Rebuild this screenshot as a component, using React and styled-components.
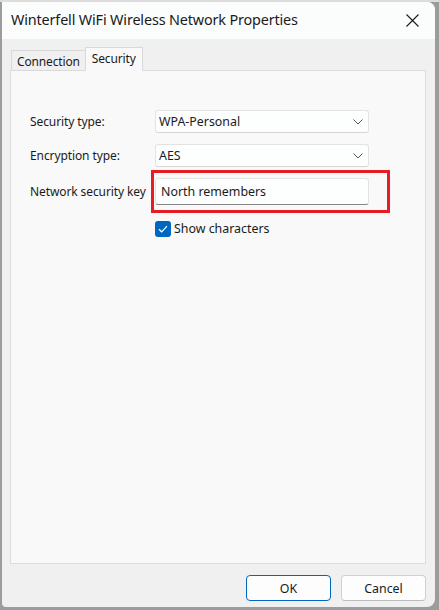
import React, { useState } from "react";
import styled, { createGlobalStyle } from "styled-components";

const GlobalStyle = createGlobalStyle`
  html, body {
    margin: 0;
    padding: 0;
    background: #9c9c9c;
  }
  body {
    font-family: "Noto Sans", "Liberation Sans", sans-serif;
    color: #1b1b1b;
  }
`

const Screen = styled.div`
  width: 439px;
  height: 610px;
  padding: 2px 0 0 2px;
  box-sizing: border-box;
  background: linear-gradient(#dcdcdc 0 2px, #9c9c9c 2px);
`

const Window = styled.div`
  width: 433px;
  height: 605px;
  display: flex;
  flex-direction: column;
  background: #f0f0f0;
  border-radius: 0 8px 8px 4px;
  overflow: hidden;
`

const TitleBar = styled.div`
  height: 37px;
  flex: none;
  display: flex;
  align-items: center;
  justify-content: space-between;
  padding: 0 0 0 9px;
  background: #fbfdfd;
`

const Title = styled.div`
  font-size: 14.4px;
  letter-spacing: -0.15px;
  color: #1a1a1a;
  margin-top: -2px;
`

const CloseButton = styled.div`
  width: 46px;
  height: 37px;
  display: flex;
  align-items: center;
  justify-content: center;
`

const Body = styled.div`
  flex: 1;
  display: flex;
  flex-direction: column;
  padding: 8px 9px 6px 8px;
`

const TabStrip = styled.div`
  display: flex;
  align-items: flex-end;
  height: 24px;
  padding-left: 1px;
  position: relative;
  z-index: 1;
  margin-bottom: -1px;
`

const Tab = styled.div`
  height: ${p => (p.$active ? "24px" : "21px")};
  padding: 0 ${p => (p.$active ? "6px" : "5px")};
  box-sizing: border-box;
  display: flex;
  align-items: ${p => (p.$active ? "flex-start" : "center")};
  padding-top: ${p => (p.$active ? "2px" : "1px")};
  font-size: 12px;
  letter-spacing: -0.15px;
  background: ${p => (p.$active ? "#f9f9f9" : "#f0f0f0")};
  border: 1px solid #d9d9d9;
  border-bottom: ${p => (p.$active ? "1px solid #f9f9f9" : "1px solid #d9d9d9")};
  margin-left: ${p => (p.$active ? "-1px" : "0")};
  color: #1a1a1a;
`

const Panel = styled.div`
  height: 494px;
  background: #f9f9f9;
  border: 1px solid #dcdcdc;
  box-sizing: border-box;
  padding: 39px 20px 0 19px;
  display: flex;
  flex-direction: column;
`

const FieldRow = styled.div`
  display: flex;
  align-items: center;
  height: ${p => p.$h || 23}px;
  margin-bottom: ${p => p.$gap || 11}px;
`

const Label = styled.div`
  width: 125px;
  flex: none;
  font-size: 12px;
  letter-spacing: -0.1px;
  color: #1b1b1b;
  white-space: nowrap;
`

const Select = styled.div`
  width: 214px;
  height: 100%;
  box-sizing: border-box;
  display: flex;
  align-items: center;
  justify-content: space-between;
  padding: 0 5px 0 3px;
  background: #fdfefe;
  border: 1px solid #e3e3e3;
  border-bottom-color: #d6d6d6;
  border-radius: 3px;
  font-size: 12.4px;
`

const InputWrap = styled.div`
  position: relative;
  width: 214px;
  height: 100%;
`

const KeyInput = styled.div`
  height: 100%;
  box-sizing: border-box;
  display: flex;
  align-items: center;
  padding: 0 0 1px 5px;
  background: #fdfefe;
  border: 1px solid #e3e3e3;
  border-bottom: 1px solid #868686;
  border-radius: 3px;
  font-size: 12.4px;
`

const Highlight = styled.div`
  position: absolute;
  left: -4px;
  right: -21px;
  top: -8px;
  bottom: -8px;
  border: 3px solid #e81c24;
  pointer-events: none;
`

const CheckRow = styled.label`
  display: flex;
  align-items: center;
  gap: 3px;
  margin-left: 125px;
  font-size: 12.4px;
  cursor: default;
`

const CheckBox = styled.span`
  width: 16px;
  height: 16px;
  border-radius: 3px;
  background: ${p => (p.$checked ? "#0067c0" : "#ffffff")};
  border: ${p => (p.$checked ? "none" : "1px solid #8a8a8a")};
  box-sizing: border-box;
  display: flex;
  align-items: center;
  justify-content: center;
`

const Footer = styled.div`
  display: flex;
  justify-content: flex-end;
  gap: 10px;
  padding-top: 11px;
`

const Button = styled.button`
  width: 85px;
  height: 26px;
  box-sizing: border-box;
  font-family: inherit;
  font-size: 12.4px;
  color: #1a1a1a;
  background: #fdfdfd;
  border: 1px solid ${p => (p.$primary ? "#0067c0" : "#d0d0d0")};
  border-bottom-color: ${p => (p.$primary ? "#0067c0" : "#bcbcbc")};
  border-radius: 4px;
  padding: 0;
`

const Chevron = () => (
  <svg width="10" height="6" viewBox="0 0 10 6">
    <path d="M0.5 0.5 L5 5 L9.5 0.5" fill="none" stroke="#555" strokeWidth="1" />
  </svg>
)

export default function App() {
  const [show, setShow] = useState(true);

  return (
    <>
      <GlobalStyle />
      <Screen>
        <Window>
          <TitleBar>
            <Title>Winterfell WiFi Wireless Network Properties</Title>
            <CloseButton>
              <svg width="13" height="13" viewBox="0 0 13 13">
                <path d="M0.5 0.5 L12.5 12.5 M12.5 0.5 L0.5 12.5" stroke="#1a1a1a" strokeWidth="1.1" />
              </svg>
            </CloseButton>
          </TitleBar>
          <Body>
            <TabStrip>
              <Tab>Connection</Tab>
              <Tab $active>Security</Tab>
            </TabStrip>
            <Panel>
              <FieldRow>
                <Label>Security type:</Label>
                <Select>
                  WPA-Personal
                  <Chevron />
                </Select>
              </FieldRow>
              <FieldRow>
                <Label>Encryption type:</Label>
                <Select>
                  AES
                  <Chevron />
                </Select>
              </FieldRow>
              <FieldRow $h={27} $gap={15}>
                <Label>Network security key</Label>
                <InputWrap>
                  <KeyInput>North remembers</KeyInput>
                  <Highlight />
                </InputWrap>
              </FieldRow>
              <CheckRow onClick={() => setShow(!show)}>
                <CheckBox $checked={show}>
                  {show && (
                    <svg width="10" height="8" viewBox="0 0 10 8">
                      <path d="M1 4.2 L3.7 6.8 L9 1.2" fill="none" stroke="#fff" strokeWidth="1.2" />
                    </svg>
                  )}
                </CheckBox>
                Show characters
              </CheckRow>
            </Panel>
            <Footer>
              <Button $primary>OK</Button>
              <Button>Cancel</Button>
            </Footer>
          </Body>
        </Window>
      </Screen>
    </>
  );
}
